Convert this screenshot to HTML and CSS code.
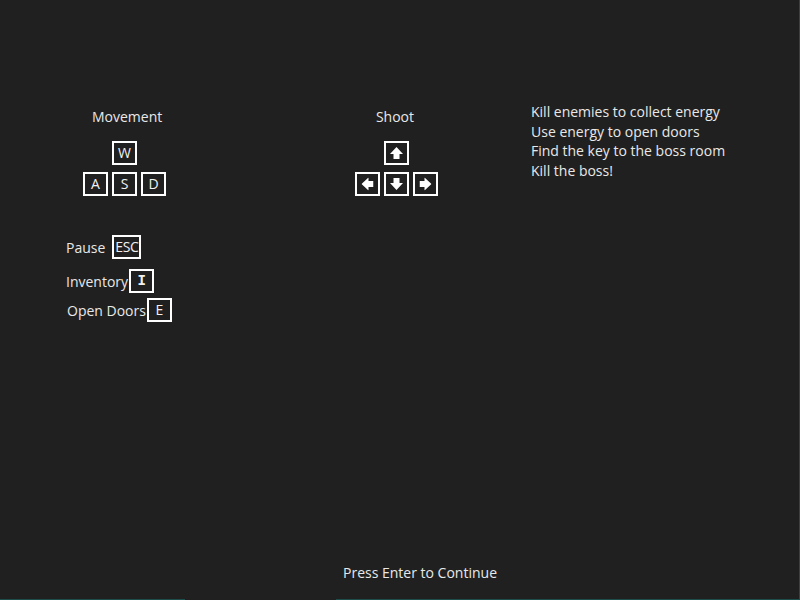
FILE: index.html
```html
<!DOCTYPE html>
<html>
<head>
<meta charset="utf-8">
<link rel="stylesheet" href="styles.css">
</head>
<body>
<div class="page">
  <div class="top">
    <div class="col-left">
      <div class="title movement-title">Movement</div>
      <div class="cluster wasd">
        <div class="key-row"><span class="key">W</span></div>
        <div class="key-row"><span class="key">A</span><span class="key">S</span><span class="key">D</span></div>
      </div>
      <div class="bind pause"><span class="label">Pause</span><span class="key key-wide">ESC</span></div>
      <div class="bind inventory"><span class="label">Inventory</span><span class="key key-mono">I</span></div>
      <div class="bind doors"><span class="label">Open Doors</span><span class="key">E</span></div>
    </div>
    <div class="col-mid">
      <div class="title">Shoot</div>
      <div class="cluster arrows">
        <div class="key-row"><span class="key"><svg class="arrow" viewBox="0 0 13 12"><path d="M6.5 0L13 7H9.5V12H3.5V7H0Z"/></svg></span></div>
        <div class="key-row">
          <span class="key"><svg class="arrow rot-l" viewBox="0 0 13 12"><path d="M6.5 0L13 7H9.5V12H3.5V7H0Z"/></svg></span>
          <span class="key"><svg class="arrow rot-d" viewBox="0 0 13 12"><path d="M6.5 0L13 7H9.5V12H3.5V7H0Z"/></svg></span>
          <span class="key"><svg class="arrow rot-r" viewBox="0 0 13 12"><path d="M6.5 0L13 7H9.5V12H3.5V7H0Z"/></svg></span>
        </div>
      </div>
    </div>
    <div class="col-right">
      <div class="line">Kill enemies to collect energy</div>
      <div class="line">Use energy to open doors</div>
      <div class="line">Find the key to the boss room</div>
      <div class="line">Kill the boss!</div>
    </div>
  </div>
  <div class="footer">Press Enter to Continue</div>
  <div class="edge-bottom"></div>
</div>
</body>
</html>
```

FILE: styles.css
```css
html, body {
  margin: 0;
  padding: 0;
  background: #202020;
}
body {
  font-family: "Open Sans", "Noto Sans", sans-serif;
  font-size: 14px;
  line-height: 19px;
  color: #e8e8e8;
}
.page {
  width: 800px;
  height: 600px;
  box-sizing: border-box;
  border-right: 1px solid #1d4e4c;
  display: flex;
  flex-direction: column;
}
.top {
  display: grid;
  grid-template-columns: 200px 260px 1fr;
  padding-top: 103px;
  padding-left: 65px;
}
.col-left {
  padding-top: 4px;
  display: flex;
  flex-direction: column;
  align-items: flex-start;
}
.col-mid {
  padding-top: 4px;
  display: flex;
  flex-direction: column;
  align-items: center;
}
.col-right {
  padding-left: 6px;
  margin-top: -1px;
}
.line {
  line-height: 19.5px;
}
.movement-title {
  margin-left: 27px;
}
.cluster {
  margin-top: 15px;
  display: flex;
  flex-direction: column;
  align-items: center;
  gap: 7px;
}
.wasd {
  margin-left: 18px;
}
.arrows {
  margin-left: 2px;
}
.key-row {
  display: flex;
  gap: 4px;
}
.key {
  box-sizing: border-box;
  width: 25px;
  height: 24px;
  border: 2px solid #ffffff;
  display: flex;
  align-items: center;
  justify-content: center;
  color: #f0f0f0;
  font-size: 14px;
  line-height: 1;
}
.key-wide {
  width: 29px;
  letter-spacing: -0.4px;
}
.key-mono {
  font-family: "Liberation Mono", "DejaVu Sans Mono", monospace;
  font-weight: bold;
  font-size: 14px;
}
.arrow {
  width: 13px;
  height: 12px;
  fill: #ffffff;
}
.rot-l { transform: rotate(-90deg); }
.rot-d { transform: rotate(180deg); }
.rot-r { transform: rotate(90deg); }
.bind {
  display: flex;
  align-items: center;
}
.pause {
  margin-top: 39px;
  margin-left: 1px;
}
.pause .key { margin-left: 7px; }
.inventory {
  margin-top: 10px;
  margin-left: 1px;
}
.inventory .key { margin-left: 1px; }
.doors {
  margin-top: 5px;
  margin-left: 2px;
}
.doors .key { margin-left: 1px; }
.footer {
  margin-top: auto;
  padding-left: 343px;
  padding-bottom: 17px;
}
.edge-bottom {
  height: 1px;
  background: linear-gradient(to right, #1d4e4c 0, #1d4e4c 185px, transparent 185px, transparent 336px, #1d4e4c 336px);
}
```
